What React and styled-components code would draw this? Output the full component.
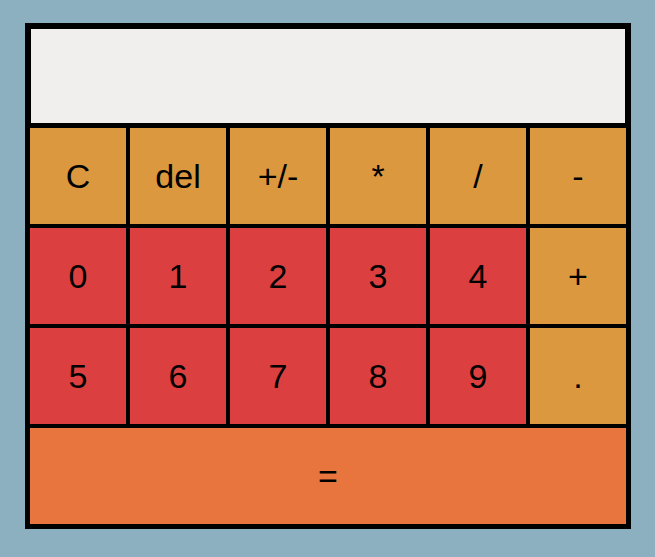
import React from "react";
import styled, { createGlobalStyle } from "styled-components";

const Global = createGlobalStyle`
  html, body { margin: 0; padding: 0; background: #8db0c1; }
  body { font-family: "Liberation Sans", Arial, sans-serif; }
`;

const Page = styled.div`
  padding: 23px 0 0 25px;
  height: 557px;
  box-sizing: border-box;
`;

const Calculator = styled.div`
  width: 606px;
  box-sizing: border-box;
  border: 3px solid #000;
  display: grid;
  grid-template-columns: repeat(6, 100px);
  grid-auto-rows: 100px;
`;

const Display = styled.div`
  grid-column: 1 / -1;
  box-sizing: border-box;
  border: 3px solid #000;
  background: #f0efed;
`;

const colors = {
  op: "#db983f",
  num: "#dc3f3f",
  eq: "#e8753d",
};

const Key = styled.button`
  box-sizing: border-box;
  border: 2px solid #000;
  margin: 0;
  padding: 0;
  background: ${(p) => colors[p.$kind]};
  color: #000;
  font-family: "Liberation Sans", Arial, sans-serif;
  font-size: 34px;
  display: flex;
  align-items: center;
  justify-content: center;
  grid-column: ${(p) => (p.$wide ? "1 / -1" : "auto")};
  cursor: pointer;
`;

const rows = [
  [["C", "op"], ["del", "op"], ["+/-", "op"], ["*", "op"], ["/", "op"], ["-", "op"]],
  [["0", "num"], ["1", "num"], ["2", "num"], ["3", "num"], ["4", "num"], ["+", "op"]],
  [["5", "num"], ["6", "num"], ["7", "num"], ["8", "num"], ["9", "num"], [".", "op"]],
];

export default function App() {
  return (
    <>
      <Global />
      <Page>
        <Calculator>
          <Display />
          {rows.flat().map(([label, kind], i) => (
            <Key key={i} $kind={kind}>
              {label}
            </Key>
          ))}
          <Key $kind="eq" $wide>
            =
          </Key>
        </Calculator>
      </Page>
    </>
  );
}
